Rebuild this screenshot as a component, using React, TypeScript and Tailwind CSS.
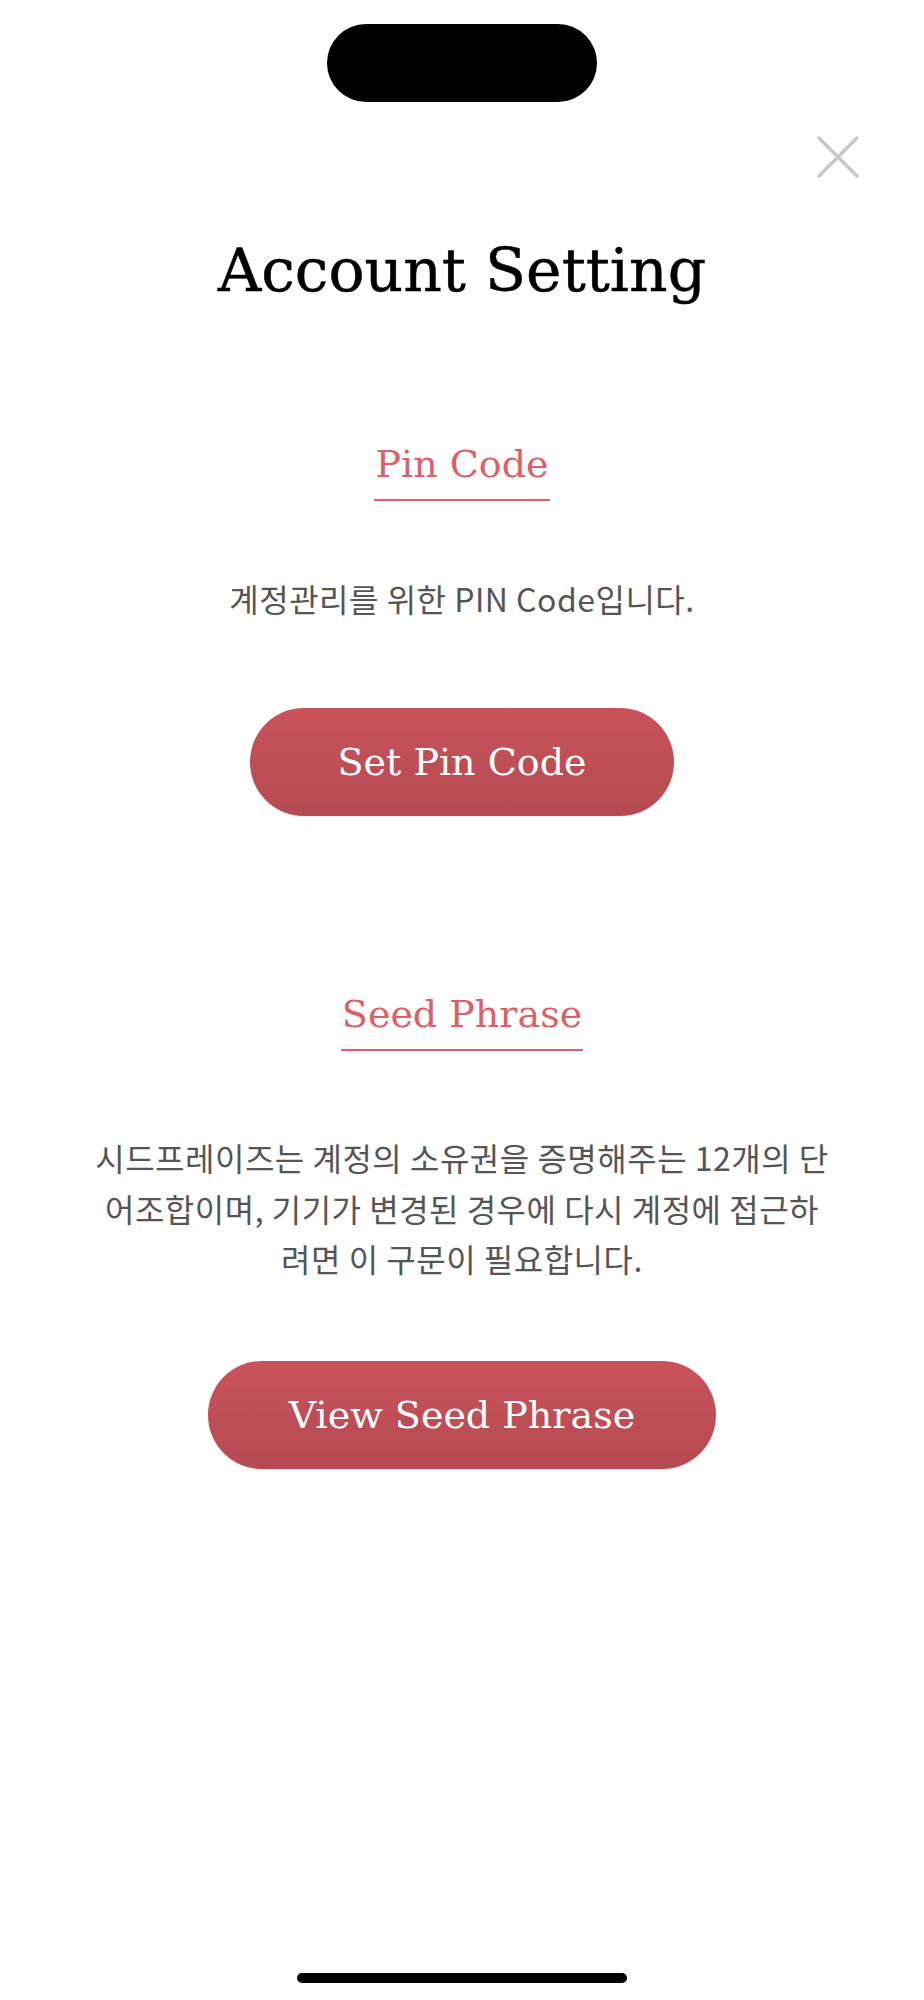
import React from 'react';

const serif = "font-['DejaVu_Serif',serif]";
const kr = "font-['Noto_Sans_CJK_KR','Noto_Sans',sans-serif]";

function SectionTitle({ children }: { children: React.ReactNode }) {
  return (
    <h2
      className={`${serif} inline-block text-[38px] leading-none text-[#dd5f68] pb-[16px] px-[1px] border-b-2 border-[#dd5f68]`}
    >
      {children}
    </h2>
  );
}

function PillButton({ children, className }: { children: React.ReactNode; className: string }) {
  return (
    <button
      className={`${serif} ${className} h-[108px] rounded-full bg-gradient-to-b from-[#c9535b] to-[#b54a52] text-white text-[38px] leading-none shadow-[0_1px_2px_rgba(0,0,0,0.08)]`}
    >
      {children}
    </button>
  );
}

function CloseIcon() {
  return (
    <svg width="44" height="44" viewBox="0 0 44 44" fill="none">
      <path d="M3 3L41 41M41 3L3 41" stroke="#c8c8c8" strokeWidth="3.5" strokeLinecap="round" />
    </svg>
  );
}

export default function App() {
  return (
    <div className="w-[924px] h-[2000px] bg-white flex flex-col items-center">
      {/* dynamic island */}
      <div className="pt-[24px]">
        <div className="w-[270px] h-[78px] rounded-full bg-black" />
      </div>

      <div className="w-full flex justify-end pr-[64px] mt-[33px]">
        <button aria-label="close">
          <CloseIcon />
        </button>
      </div>

      <h1
        className={`${serif} mt-[61px] text-[60px] leading-none text-black [-webkit-text-stroke:0.5px_black]`}
      >
        Account Setting
      </h1>

      <div className="mt-[145px]">
        <SectionTitle>Pin Code</SectionTitle>
      </div>
      <p className={`${kr} mt-[72px] text-[32px] tracking-[0.5px] leading-[51px] text-[#555555]`}>
        계정관리를 위한 PIN Code입니다.
      </p>
      <div className="mt-[84px]">
        <PillButton className="px-[88px]">Set Pin Code</PillButton>
      </div>

      <div className="mt-[179px]">
        <SectionTitle>Seed Phrase</SectionTitle>
      </div>
      <p
        className={`${kr} mt-[81px] text-[32px] tracking-[0.5px] leading-[50.5px] text-[#555555] text-center`}
      >
        <span className="block">시드프레이즈는 계정의 소유권을 증명해주는 12개의 단</span>
        <span className="block">어조합이며, 기기가 변경된 경우에 다시 계정에 접근하</span>
        <span className="block">려면 이 구문이 필요합니다.</span>
      </p>
      <div className="mt-[77px]">
        <PillButton className="px-[81px]">View Seed Phrase</PillButton>
      </div>

      {/* home indicator */}
      <div className="mt-auto mb-[17px] w-[330px] h-[10px] rounded-full bg-black" />
    </div>
  );
}
